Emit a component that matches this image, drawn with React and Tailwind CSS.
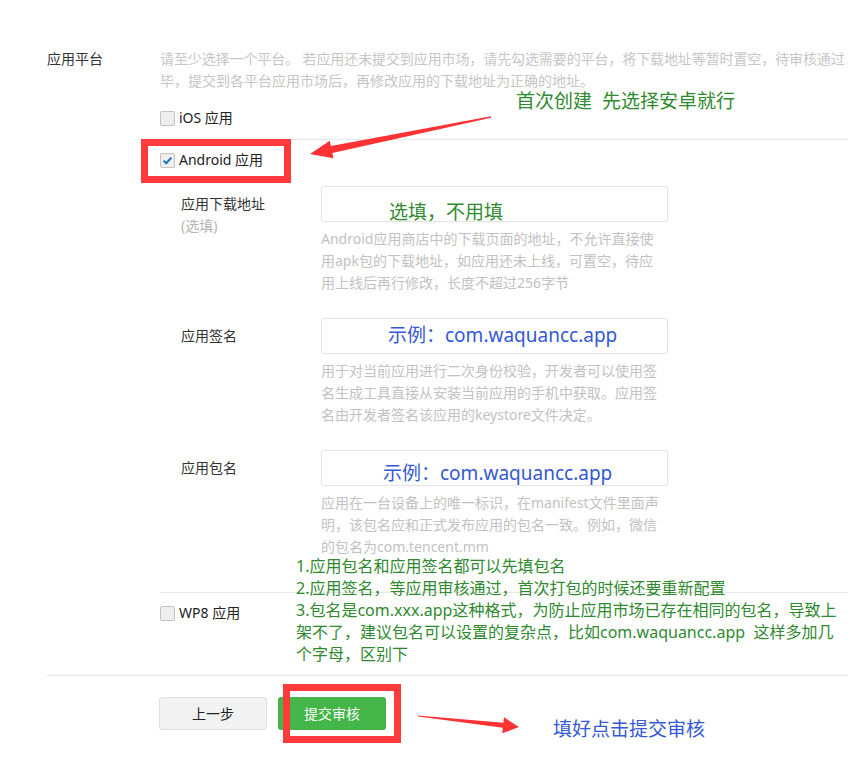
import React from "react";

function Checkbox({ checked }) {
  return (
    <span className="inline-flex items-center justify-center w-[15px] h-[15px] border border-[#c3c3c3] rounded-[2px] bg-[#eeeeee] shrink-0">
      {checked && (
        <svg width="13" height="13" viewBox="0 0 13 13">
          <path d="M2.6 6.6 L5.2 9.2 L10.4 3.6" fill="none" stroke="#1f6fc5" strokeWidth="2" />
        </svg>
      )}
    </span>
  );
}

function CheckRow({ checked, label }) {
  return (
    <div className="flex items-center h-[22px] gap-[4px] text-[14px] text-[#222]">
      <Checkbox checked={checked} />
      <span className="leading-[22px]">{label}</span>
    </div>
  );
}

function Field({ label, sub, lines, overlay, className = "" }) {
  return (
    <div className={"flex " + className}>
      <div className="w-[161px] shrink-0 pl-[21px] pt-[7px] leading-[22px]">
        <div className="text-[#333]">{label}</div>
        {sub && <div className="text-[#b5b5b5]">{sub}</div>}
      </div>
      <div className="w-[347px] shrink-0">
        <div className="relative h-[36px] border border-[#e3e3e3] rounded-[3px] bg-white">{overlay}</div>
        <div className="mt-[6px] leading-[22px] text-[#c2c2c2] whitespace-nowrap">
          {lines.map((l, i) => (
            <div key={i}>{l}</div>
          ))}
        </div>
      </div>
    </div>
  );
}

export default function App() {
  return (
    <div className="relative w-[848px] h-[763px] overflow-hidden bg-white text-[14px] font-['Noto_Sans','Noto_Sans_CJK_SC',sans-serif]">
      <div className="pt-[48px] pl-[47px]">
        <div className="flex border-b border-[#e6e6e6]">
          <div className="w-[113px] shrink-0 leading-[22px] text-[#333]">应用平台</div>
          <div className="flex-1 min-w-0">
            <div className="leading-[22px] text-[#c6c6c6] whitespace-nowrap">
              <div className="tracking-[-0.1px]">请至少选择一个平台。 若应用还未提交到应用市场，请先勾选需要的平台，将下载地址等暂时置空，待审核通过</div>
              <div>毕，提交到各平台应用市场后，再修改应用的下载地址为正确的地址。</div>
            </div>
            <div className="mt-[15px] pb-[10px] border-b border-[#e6e6e6]">
              <CheckRow label="iOS 应用" />
            </div>
            <div className="pt-[9px] pb-[34px] border-b border-[#e6e6e6]">
              <CheckRow checked label="Android 应用" />
              <Field
                className="mt-[15px]"
                label="应用下载地址"
                sub="(选填)"
                lines={[
                  "Android应用商店中的下载页面的地址，不允许直接使",
                  "用apk包的下载地址，如应用还未上线，可置空，待应",
                  "用上线后再行修改，长度不超过256字节",
                ]}
                overlay={
                  <span className="absolute left-[67px] top-[13px] leading-[24px] text-[19px] text-[#2f8a2f] whitespace-nowrap">
                    选填，不用填
                  </span>
                }
              />
              <Field
                className="mt-[24px]"
                label="应用签名"
                lines={[
                  "用于对当前应用进行二次身份校验，开发者可以使用签",
                  "名生成工具直接从安装当前应用的手机中获取。应用签",
                  "名由开发者签名该应用的keystore文件决定。",
                ]}
                overlay={
                  <span className="absolute left-[66px] top-[4px] leading-[24px] text-[19px] text-[#3558d4] whitespace-nowrap">
                    示例：com.waquancc.app
                  </span>
                }
              />
              <Field
                className="mt-[24px]"
                label="应用包名"
                lines={[
                  "应用在一台设备上的唯一标识，在manifest文件里面声",
                  "明，该包名应和正式发布应用的包名一致。例如，微信",
                  "的包名为com.tencent.mm",
                ]}
                overlay={
                  <span className="absolute left-[61px] top-[10px] leading-[24px] text-[19px] text-[#3558d4] whitespace-nowrap">
                    示例：com.waquancc.app
                  </span>
                }
              />
            </div>
            <div className="pt-[9px] pb-[51px]">
              <CheckRow label="WP8 应用" />
            </div>
          </div>
        </div>
        <div className="mt-[21px] pl-[112px] flex gap-[11px]">
          <button className="w-[108px] h-[33px] rounded-[3px] border border-[#e0e0e0] bg-[#f2f2f2] text-[14px] text-[#222]">
            上一步
          </button>
          <button className="w-[108px] h-[33px] rounded-[3px] bg-[#44b549] text-[14px] text-white">
            提交审核
          </button>
        </div>
      </div>

      {/* annotations */}
      <div className="absolute left-[516px] top-[89px] leading-[24px] text-[19px] text-[#2f8a2f] whitespace-nowrap">
        首次创建&nbsp;&nbsp;先选择安卓就行
      </div>
      <div className="absolute left-[296px] top-[555px] leading-[22px] text-[16px] text-[#2f8a2f] whitespace-nowrap">
        <div>1.应用包名和应用签名都可以先填包名</div>
        <div>2.应用签名，等应用审核通过，首次打包的时候还要重新配置</div>
        <div>3.包名是com.xxx.app这种格式，为防止应用市场已存在相同的包名，导致上</div>
        <div>架不了，建议包名可以设置的复杂点，比如com.waquancc.app&nbsp;&nbsp;这样多加几</div>
        <div>个字母，区别下</div>
      </div>
      <div className="absolute left-[553px] top-[717px] leading-[24px] text-[19px] text-[#3558d4] whitespace-nowrap">
        填好点击提交审核
      </div>

      <div className="absolute left-[141px] top-[139px] w-[150px] h-[44px] border-[7px] border-[#ff3b3b]" />
      <div className="absolute left-[283px] top-[684px] w-[118px] h-[59px] border-[7px] border-[#ff3b3b]" />

      <svg className="absolute left-0 top-0 pointer-events-none" width="848" height="763" viewBox="0 0 848 763">
        <polygon
          points="310,154 329.8,140.7 330.9,146.1 491,116.3 491,117.7 332.3,152.9 333.4,158.3"
          fill="#ff3333"
        />
        <polygon
          points="519,727 504,717.3 503.4,722.8 418,715.4 418,716.6 502.8,727.8 502.2,733.3"
          fill="#ff3333"
        />
      </svg>
    </div>
  );
}
